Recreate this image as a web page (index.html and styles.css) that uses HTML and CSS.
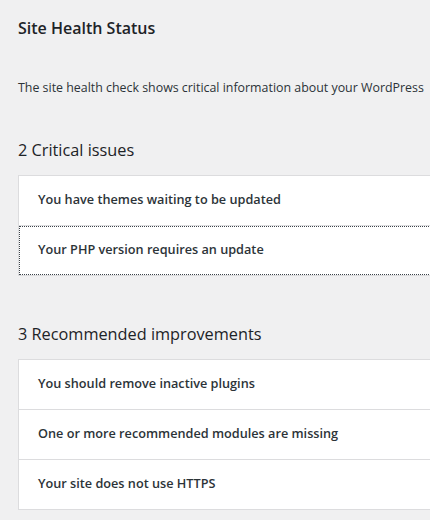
FILE: index.html
```html
<!DOCTYPE html>
<html lang="en">
<head>
<meta charset="utf-8">
<title>Site Health Status</title>
<link rel="stylesheet" href="styles.css">
</head>
<body>
<div class="page">
  <h1 class="title">Site Health Status</h1>
  <p class="intro">The site health check shows critical information about your WordPress</p>

  <h2 class="group-title">2 Critical issues</h2>
  <div class="accordion">
    <button class="row">You have themes waiting to be updated</button>
    <button class="row row-focus">Your PHP version requires an update</button>
  </div>

  <h2 class="group-title group-title-2">3 Recommended improvements</h2>
  <div class="accordion">
    <button class="row">You should remove inactive plugins</button>
    <button class="row">One or more recommended modules are missing</button>
    <button class="row">Your site does not use HTTPS</button>
  </div>
</div>
</body>
</html>
```

FILE: styles.css
```css
html, body {
  margin: 0;
  padding: 0;
  background: #f0f0f1;
  overflow: hidden;
}

.page {
  width: 430px;
  height: 520px;
  overflow: hidden;
  padding-left: 18px;
  box-sizing: border-box;
  font-family: "Open Sans", "Noto Sans", sans-serif;
  color: #1d2327;
}

.title {
  margin: 0;
  padding-top: 16px;
  font-size: 16px;
  line-height: 24px;
  font-weight: 600;
  color: #1d2327;
}

.intro {
  margin: 38px 0 0;
  font-size: 12.4px;
  line-height: 20px;
  white-space: nowrap;
  color: #2c3338;
}

.group-title {
  margin: 40px 0 0;
  font-size: 16.3px;
  line-height: 24px;
  font-weight: 400;
  color: #1d2327;
}

.group-title-2 {
  margin-top: 46px;
}

.accordion {
  margin-top: 13px;
  width: 440px;
  background: #fff;
  border: 1px solid #dcdcde;
  border-right: none;
  display: flex;
  flex-direction: column;
}

.row {
  display: block;
  height: 50px;
  padding: 0 0 3px 19px;
  margin: 0;
  border: none;
  border-bottom: 1px solid #dcdcde;
  background: #fff;
  text-align: left;
  font-family: "Open Sans", "Noto Sans", sans-serif;
  font-size: 12.7px;
  font-weight: 600;
  color: #2c3338;
  box-sizing: border-box;
}

.row:last-child {
  border-bottom: none;
  height: 49px;
}

.row-focus {
  outline: 1px dotted #3c434a;
  outline-offset: -1px;
}
```
